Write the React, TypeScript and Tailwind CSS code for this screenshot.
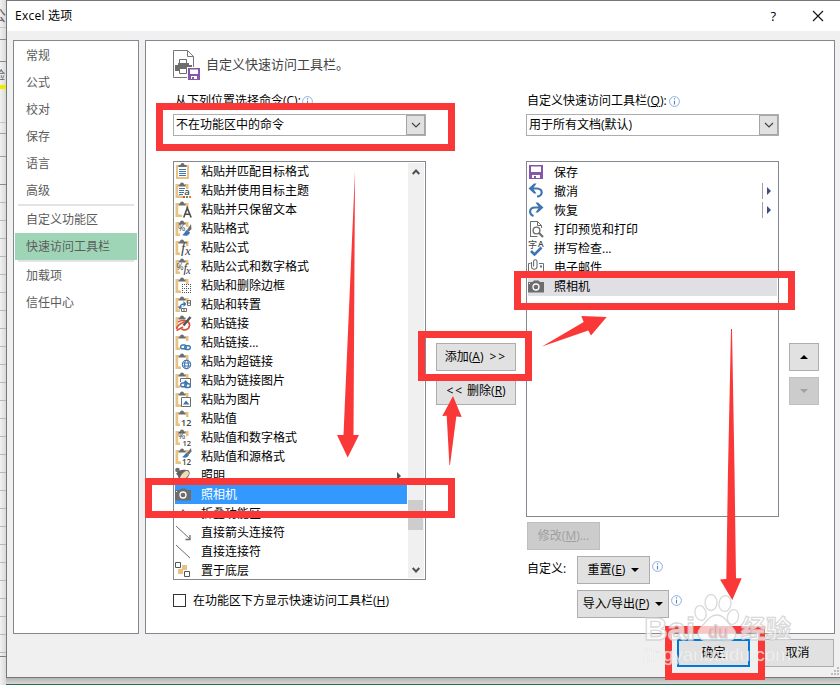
import React from 'react';

const RED = '#fb3838';
const TAN = '#e8c283';
const GRAY = '#6d6d6d';
const BLUE = '#3f76b0';

interface CommandItem {
  label: string;
  icon: string;
  arrow?: boolean;
  selected?: boolean;
}

const sheetLines = [
  { h: 28, c: 'border-[#c6c6c6]' },
  { h: 12, c: 'border-[#8c8c8c]' },
  { h: 22, c: 'border-[#8c8c8c]' },
  { h: 61, c: 'border-[#c6c6c6]' },
  { h: 11, c: 'border-[#a0a0a0]' },
  { h: 23, c: 'border-[#a0a0a0]' },
  { h: 28, c: 'border-[#8c8c8c]' },
  ...Array.from({ length: 26 }, () => ({ h: 18, c: 'border-[#b8b8b8]' })),
  { h: 4, c: 'border-[#808080]' },
];

const categories = ['常规', '公式', '校对', '保存', '语言', '高级', '-', '自定义功能区', '快速访问工具栏', '-', '加载项', '信任中心'];

const commands: CommandItem[] = [
  { label: '粘贴并匹配目标格式', icon: 'lines' },
  { label: '粘贴并使用目标主题', icon: 'theme' },
  { label: '粘贴并只保留文本', icon: 'text' },
  { label: '粘贴格式', icon: 'format' },
  { label: '粘贴公式', icon: 'fx' },
  { label: '粘贴公式和数字格式', icon: 'pfx' },
  { label: '粘贴和删除边框', icon: 'noborder' },
  { label: '粘贴和转置', icon: 'transpose' },
  { label: '粘贴链接', icon: 'pastelink' },
  { label: '粘贴链接...', icon: 'link' },
  { label: '粘贴为超链接', icon: 'hyper' },
  { label: '粘贴为链接图片', icon: 'linkpic' },
  { label: '粘贴为图片', icon: 'pic' },
  { label: '粘贴值', icon: 'val' },
  { label: '粘贴值和数字格式', icon: 'pval' },
  { label: '粘贴值和源格式', icon: 'sval' },
  { label: '照明', icon: 'light', arrow: true },
  { label: '照相机', icon: 'camera', selected: true },
  { label: '折叠功能区', icon: 'collapse' },
  { label: '直接箭头连接符', icon: 'arrow' },
  { label: '直接连接符', icon: 'line' },
  { label: '置于底层', icon: 'back' },
];

const toolbar: CommandItem[] = [
  { label: '保存', icon: 'save' },
  { label: '撤消', icon: 'undo', arrow: true },
  { label: '恢复', icon: 'redo', arrow: true },
  { label: '打印预览和打印', icon: 'preview' },
  { label: '拼写检查...', icon: 'spell' },
  { label: '电子邮件', icon: 'mail' },
  { label: '照相机', icon: 'camera', selected: true },
];

const Board = () => (
  <g>
    <path d="M.5 3h3v2.500h-.3v9.100H5V17H.5zM10 3h3.500v5H11V5.500h-1z" fill={TAN} />
    <path d="M3.500 5.500V3.500H5a2 2 0 0 1 4 0h1.500v2z" fill={GRAY} />
  </g>
);

const Chain = () => (
  <g fill="none" stroke={BLUE} strokeWidth="1.400">
    <rect x="5.700" y="12" width="5.600" height="3.800" rx="1.900" />
    <rect x="9.700" y="12.700" width="5.600" height="3.800" rx="1.900" />
  </g>
);

const T = ({ x, y, s, children, italic, thin }: any) => (
  <text
    x={x}
    y={y}
    fontSize={s}
    fill="#444"
    fontStyle={italic ? 'italic' : 'normal'}
    fontWeight={italic || thin ? 400 : 600}
    fontFamily={italic ? '"Liberation Serif", serif' : '"Open Sans", sans-serif'}
  >
    {children}
  </text>
);

const glyphs: Record<string, React.ReactNode> = {
  lines: (
    <>
      <path d="M1 3h13v14H1z" fill={TAN} />
      <path d="M3 5h9v10H3z" fill="#fff" />
      <path d="M3.500 5V3H5.500a2 2 0 0 1 4 0h2v2z" fill={GRAY} />
      <path d="M4 7.500h7M4 9.500h7M4 11.500h7M4 13.500h7" stroke={BLUE} />
    </>
  ),
  theme: (
    <>
      <Board />
      <path d="M3 14.600h5V17H3z" fill={TAN} />
      <path d="M4 7.500h6M4 9.500h5M4 11.500h5M4 13.500h4" stroke={BLUE} />
      <T x={9.200} y={14} s={9.500}>a</T>
      <path d="M8 15h2v2H8z" fill="#d2522b" />
      <path d="M11 15h2v2h-2z" fill="#3f9a70" />
      <path d="M14 15h2v2h-2z" fill="#e07b28" />
    </>
  ),
  text: (
    <>
      <Board />
      <path d="M3 14.600h4V17H3z" fill={TAN} />
      <path d="M8.700 17.500 12.300 8l3.800 9.500M10 14.300h4.800" fill="none" stroke="#4d4d4d" strokeWidth="1.600" />
    </>
  ),
  format: (
    <>
      <Board />
      <T x={3} y={12} s={9} thin>%</T>
      <path d="m16 5-4 6 2 1.500 2.500-2.500z" fill={GRAY} />
      <path d="M12 11c-2 .5-2 4-5 5 3 1.600 7 1 8-2.600z" fill={BLUE} />
    </>
  ),
  fx: (
    <>
      <Board />
      <T x={6} y={15} s={15} italic>f</T>
      <T x={10} y={16.500} s={13} italic>x</T>
    </>
  ),
  pfx: (
    <>
      <Board />
      <T x={1.500} y={12.500} s={8.500} thin>%</T>
      <T x={8.500} y={14.500} s={13} italic>f</T>
      <T x={11} y={16.500} s={11} italic>x</T>
    </>
  ),
  noborder: (
    <>
      <Board />
      <path d="M3 14.600h3V17H3z" fill={TAN} />
      <path d="M7 8.500h9M7 12.500h9M7 16.500h9" stroke="#555" strokeDasharray="1 1" />
      <path d="M7.500 8v9M11.500 8v9M15.500 8v9" stroke="#555" strokeDasharray="1 1" />
    </>
  ),
  transpose: (
    <>
      <Board />
      <path d="M5 13c0-3 1-4 5-4" fill="none" stroke={BLUE} strokeWidth="1.500" />
      <path d="m8.500 6 3 3-3 3zM2.600 11.500h4.800L5 14.500z" fill={BLUE} />
      <path d="M12.500 5.500h3v5h-3zM12.500 8h3M6.500 13.500h5v3h-5zM9 13.500v3" fill="none" stroke={GRAY} />
    </>
  ),
  pastelink: (
    <>
      <path d="M.5 3h3v2.500H3V14H.5z" fill={TAN} />
      <path d="M3 8c5-3 12-1 11.500 3.500-.5 5-6 5-8 3.500M1.500 15c1-5 5-6 8-7M1.500 16.500 8 13" fill="none" stroke="#d9553b" strokeWidth="1.700" />
      <path d="M3.500 5.500V3.500H5a2 2 0 0 1 4 0h1.500v2z" fill={GRAY} />
      <path d="M8.500 11.500 15.500 3" stroke="#555" strokeWidth="2.400" />
    </>
  ),
  link: (
    <>
      <Board />
      <Chain />
    </>
  ),
  hyper: (
    <>
      <Board />
      <path d="M3 14.600h3V17H3z" fill={TAN} />
      <g fill="none" stroke={BLUE} strokeWidth="1.100">
        <circle cx="11.500" cy="12.500" r="4.200" fill="#fff" />
        <ellipse cx="11.500" cy="12.500" rx="1.900" ry="4.200" />
        <path d="M7.700 11h7.600M7.700 14h7.600" />
      </g>
    </>
  ),
  linkpic: (
    <>
      <Board />
      <path d="M5.500 11V7.500h10v9" fill="none" stroke={GRAY} />
      <path d="m8 12 2.500-3 3 3z" fill={BLUE} />
      <Chain />
    </>
  ),
  pic: (
    <>
      <Board />
      <path d="M3 14.600h3V17H3z" fill={TAN} />
      <path d="M6.500 7.500h9v9h-9z" fill="#fff" stroke={GRAY} />
      <path d="m8 14.500 3-4 3.500 4z" fill={BLUE} />
    </>
  ),
  val: (
    <>
      <Board />
      <T x={6} y={17} s={9}>12</T>
    </>
  ),
  pval: (
    <>
      <Board />
      <T x={3} y={11} s={9} thin>%</T>
      <T x={7.500} y={18} s={7.500}>12</T>
    </>
  ),
  sval: (
    <>
      <Board />
      <path d="M3 14.600h3V17H3z" fill={TAN} />
      <path d="m16 1-4 5 2 1.500 2.500-3z" fill={GRAY} />
      <path d="M12 6c-2.500 0-2 3-5 4 3 1.500 6.500.5 7-2.500z" fill={BLUE} />
      <T x={7} y={17.500} s={8}>12</T>
    </>
  ),
  light: (
    <>
      <circle cx="2.500" cy="4" r="2.300" fill={GRAY} />
      <path d="M1 8c3-5 9-5 13-3L5 15C3 13 4 9 1 8z" fill="#5f5f5f" />
      <ellipse cx="9.500" cy="9.500" rx="6" ry="3.300" transform="rotate(-48 9.500 9.500)" fill="#f2ddb8" stroke={GRAY} />
    </>
  ),
  camera: (
    <>
      <path d="M0 5h4.500L6 3.500h4.500L12 5h4v10.500H0z" fill={GRAY} />
      <circle cx="8" cy="10" r="3" fill={GRAY} stroke="#fff" strokeWidth="1.300" />
      <path d="M1 6.500h1" stroke="#fff" />
    </>
  ),
  collapse: <path d="m4 10 4-5 4 5z" fill={GRAY} />,
  arrow: (
    <>
      <path d="m1 3 14 13" stroke={GRAY} />
      <path d="M15 12v4.500h-4.500" fill="none" stroke={GRAY} strokeWidth="1.300" />
    </>
  ),
  line: <path d="m1 3 14 13" stroke={GRAY} />,
  back: (
    <>
      <path d="M7 4h5v5H7zM3 8h5v5H3z" fill={TAN} />
      <path d="M.5 1.500h5v5h-5zM9.500 10.500h5v5h-5z" fill="#fff" stroke="#555" />
    </>
  ),
  save: (
    <>
      <path d="M1 2h14v14H1z" fill="#8656a8" />
      <path d="M3 3.500h10V9H3zM4 12h8v3H4z" fill="#fff" />
      <path d="M6 13h2v2H6z" fill="#8656a8" />
    </>
  ),
  undo: (
    <>
      <path d="M3 6.500h6c6.500 0 6 8 0 8" fill="none" stroke={BLUE} strokeWidth="2.200" />
      <path d="M.5 6.500 6 1.500h2.500L5 6.500l3.500 5H6z" fill={BLUE} />
    </>
  ),
  redo: (
    <>
      <path d="M13 6.500H7c-6.500 0-6 7-1.500 8.500" fill="none" stroke={BLUE} strokeWidth="2.200" />
      <path d="M15.500 6.500 10 1.500H7.500l3.500 5-3.500 5H10z" fill={BLUE} />
    </>
  ),
  preview: (
    <>
      <path d="M2.500 17V1.500h7l4 4V8M9.500 1.500v4h4M2.500 16.500h7" fill="none" stroke={GRAY} />
      <circle cx="8.500" cy="10.500" r="3.400" fill="#fff" stroke={GRAY} strokeWidth="1.400" />
      <path d="m11 13 4 4" stroke={GRAY} strokeWidth="2.200" />
    </>
  ),
  spell: (
    <>
      <text x="0" y="9" fontSize="9" fill="#444" fontFamily='"Noto Sans CJK SC", sans-serif'>字</text>
      <T x={10} y={7.500} s={8.500}>A</T>
      <path d="m3 12 3.500 3.500L13.500 8.500" fill="none" stroke={BLUE} strokeWidth="2.600" />
    </>
  ),
  mail: (
    <>
      <path d="M2.500 5.500H.5v11M11 5.500h4.500v11" fill="none" stroke={GRAY} />
      <path d="M3.500 4v5a2.800 2.800 0 0 0 5.500 0V3.500a1.700 1.700 0 0 0-3.400 0v5" fill="none" stroke={GRAY} strokeWidth="1.100" />
      <path d="M12 7.500h2v2h-2z" fill={BLUE} />
    </>
  ),
};

const Icon = ({ name }: { name: string }) => (
  <svg className="mr-2 h-[19px] w-[18px] shrink-0 overflow-visible" viewBox="0 0 18 19">
    {glyphs[name]}
  </svg>
);

const Info = ({ className = '' }: { className?: string }) => (
  <svg className={`h-[11px] w-[11px] shrink-0 ${className}`} viewBox="0 0 11 11">
    <circle cx="5.500" cy="5.500" r="4.900" fill="#fff" stroke="#8aaede" />
    <path d="M5.500 2.300v1.300M5.500 4.800v3.700" stroke="#5a7fc0" strokeWidth="1.100" />
  </svg>
);

const Select = ({ value }: { value: string }) => (
  <div className="flex h-[22px] border border-[#abadb3] bg-white">
    <span className="flex-1 pl-[2px] leading-[20px]">{value}</span>
    <span className="flex w-[19px] items-center justify-center border border-[#a5a5a5] bg-[#e1e1e1]">
      <svg width="10" height="6" viewBox="0 0 10 6">
        <path d="m1 1 4 4 4-4" fill="none" stroke="#444" strokeWidth="1.200" />
      </svg>
    </span>
  </div>
);

const tones = {
  normal: 'border border-[#adadad] bg-[#e1e1e1]',
  primary: 'border-2 border-[#0078d7] bg-[#e1e1e1]',
  disabled: 'border border-[#bfbfbf] bg-[#cccccc] text-[#a0a0a0]',
};

interface ButtonProps {
  tone?: keyof typeof tones;
  className?: string;
  children: React.ReactNode;
}

const Button = ({ tone = 'normal', className = '', children }: ButtonProps) => (
  <button className={`flex h-7 shrink-0 items-center justify-center whitespace-pre ${tones[tone]} ${className}`}>
    {children}
  </button>
);

const Caret = ({ up = false, fill = '#000' }: { up?: boolean; fill?: string }) => (
  <svg width="8" height="4" viewBox="0 0 8 4">
    <path d={up ? 'M0 4 4 0l4 4z' : 'M0 0h8L4 4z'} fill={fill} />
  </svg>
);

const Sheet = () => (
  <div className="relative flex h-[685px] w-1.5 shrink-0 flex-col overflow-hidden bg-linear-to-r from-[#f1f1f1] to-[#dadada]">
    {sheetLines.map((l, i) => (
      <div key={i} className={`shrink-0 border-b ${l.c}`} style={{ height: l.h }} />
    ))}
    <span className="absolute top-[5px] -left-[9px] text-[15px] leading-5 text-[#666]">公</span>
    <span className="absolute top-[68px] -left-[7px] text-[12px] leading-4 text-[#666]">验</span>
    <span className="absolute top-[85px] left-0 h-1 w-1.5 bg-[#eded00]" />
  </div>
);

const Sidebar = () => (
  <div className="flex h-[594px] w-[126px] shrink-0 flex-col border border-[#828790] bg-white px-px pt-px text-[#5c5c5c]">
    {categories.map((c, i) =>
      c === '-' ? (
        <div key={i} className="mr-[3px] ml-[3px] h-[2px] bg-[#e3e3e3]" />
      ) : (
        <div key={i} className={`h-[27px] pl-[11px] leading-[28px] ${i === 8 ? 'bg-[#9fd5b7]' : ''}`}>
          {c}
        </div>
      )
    )}
  </div>
);

const CommandList = () => (
  <div className="mt-[25px] flex h-[419px] overflow-hidden border border-[#828790] bg-white pl-px">
    <div className="w-[232px] shrink-0">
      {commands.map((c) => (
        <div key={c.label} className={`flex h-[19px] items-center ${c.selected ? 'bg-[#3399ff] text-white' : ''}`}>
          <Icon name={c.icon} />
          <span className="flex-1 leading-[18px]">{c.label}</span>
          {c.arrow && (
            <svg className="mr-1.5" width="4" height="8" viewBox="0 0 4 8">
              <path d="M0 0v8l4-4z" fill="#555" />
            </svg>
          )}
        </div>
      ))}
    </div>
    <div className="my-px ml-px flex w-4 flex-col items-center bg-[#f0f0f0]">
      <svg className="mt-1.5" width="8" height="6" viewBox="0 0 8 6">
        <path d="m.7 5 3.300-3.500L7.300 5" fill="none" stroke="#505050" strokeWidth="2" />
      </svg>
      <div className="mt-[325px] mr-px h-[30px] w-[15px] bg-[#cdcdcd]" />
      <svg className="mt-[37px]" width="8" height="6" viewBox="0 0 8 6">
        <path d="M.7 1 4 4.500 7.300 1" fill="none" stroke="#505050" strokeWidth="2" />
      </svg>
    </div>
  </div>
);

const ToolbarList = () => (
  <div className="mt-[25px] h-[356px] border border-[#828790] bg-white px-px pt-px">
    {toolbar.map((c) => (
      <div key={c.label} className={`flex h-[19px] items-center ${c.selected ? 'bg-[#e0dfe4]' : ''}`}>
        <Icon name={c.icon} />
        <span className="flex-1 leading-[18px]">{c.label}</span>
        {c.arrow && (
          <span className="mb-[2px] mr-1.5 flex h-4 w-[9px] items-center justify-end border-l border-[#a0a0a0]">
            <svg width="4" height="8" viewBox="0 0 4 8">
              <path d="M0 0v8l4-4z" fill="#3c4d84" />
            </svg>
          </span>
        )}
      </div>
    ))}
  </div>
);

const MainPanel = () => (
  <div className="h-[594px] w-[690px] shrink-0 border border-[#828790] bg-white pt-[9px] pl-[27px]">
    <div className="flex h-[31px] items-start">
      <svg className="mr-[5px] shrink-0" width="28" height="31" viewBox="0 0 28 31">
        <path d="M.5.500h14l6 6v21H.5zM14.500.500v6h6" fill="#fff" stroke="#777" />
        <path d="M2 15h3v-2h11v2h3v6H2z" fill={GRAY} />
        <path d="M6.500 9.500h7v4h-7zM6.500 18.500h7v5h-7z" fill="#fff" stroke={GRAY} />
        <path d="M14 17h14v14H14z" fill="#fff" />
        <path d="M15 18h12v12H15z" fill="#8656a8" />
        <path d="M17 19.500h8V24h-8zM18 26h6v3h-6z" fill="#fff" />
        <path d="M19 27h2v2h-2z" fill="#8656a8" />
      </svg>
      <span className="pt-1.5 text-[13px] leading-4 text-[#444]">自定义快速访问工具栏。</span>
    </div>

    <div className="mt-[11px] flex">
      <div className="w-[253px] shrink-0">
        <div className="mb-1 flex h-[18px] items-center pl-[2px]">
          <span>从下列位置选择命令(<u>C</u>):</span>
          <Info className="ml-px" />
        </div>
        <Select value="不在功能区中的命令" />
        <CommandList />
        <div className="mt-[14px] flex h-[13px] items-center">
          <span className="mr-[7px] h-[13px] w-[13px] border border-[#333] bg-white" />
          <span>在功能区下方显示快速访问工具栏(<u>H</u>)</span>
        </div>
      </div>

      <div className="mr-[10px] ml-[10px] flex w-20 shrink-0 flex-col gap-1.5 pt-[251px]">
        <Button>添加(<u>A</u>)<span className="ml-1.5 tracking-[2px]">&gt;&gt;</span></Button>
        <Button><span className="mr-[3px] tracking-[2px]">&lt;&lt;</span>删除(<u>R</u>)</Button>
      </div>

      <div className="w-[253px] shrink-0">
        <div className="mb-1 flex h-[18px] items-center pl-px">
          <span>自定义快速访问工具栏(<u>Q</u>):</span>
          <Info className="ml-[2px]" />
        </div>
        <Select value="用于所有文档(默认)" />
        <ToolbarList />
        <Button tone="disabled" className="mt-[5px] ml-px w-[73px]">修改(<u>M</u>)...</Button>
        <div className="mt-1.5 flex pl-px">
          <span className="w-[50px] pt-1 leading-[18px]">自定义:</span>
          <div className="flex flex-col gap-1.5">
            <div className="flex">
              <Button className="w-[73px] gap-1.5"><span>重置(<u>E</u>)</span><Caret /></Button>
              <Info className="mt-[5px] ml-[2px]" />
            </div>
            <div className="flex">
              <Button className="w-[92px] gap-1.5"><span>导入/导出(<u>P</u>)</span><Caret /></Button>
              <Info className="mt-[5px] ml-[2px]" />
            </div>
          </div>
        </div>
      </div>

      <div className="ml-[10px] flex w-[30px] flex-col gap-1.5 pt-[251px]">
        <Button><Caret up /></Button>
        <Button tone="disabled"><Caret fill="#a0a0a0" /></Button>
      </div>
    </div>
  </div>
);

const Dialog = () => (
  <div className="flex h-[678px] w-[834px] flex-col overflow-hidden border-t border-b border-l border-[#777] bg-[#f0f0f0]">
    <div className="flex h-[30px] shrink-0 items-center bg-white pl-2">
      <span className="flex-1 leading-4 tracking-[.25px]">Excel 选项</span>
      <span className="mr-9 text-[13px] font-medium">?</span>
      <svg className="mr-4" width="12" height="12" viewBox="0 0 12 12">
        <path d="m1 1 10 10M11 1 1 11" stroke="#111" strokeWidth="1.100" />
      </svg>
    </div>
    <div className="flex gap-1.5 pt-[9px] pl-1.5">
      <Sidebar />
      <MainPanel />
    </div>
    <div className="flex justify-end gap-[11px] pt-[5px] pr-1.5">
      <Button tone="primary" className="w-[73px]">确定</Button>
      <Button className="w-[73px]">取消</Button>
    </div>
  </div>
);

const Grip = () => (
  <svg className="absolute top-[667px] left-[831px]" width="9" height="9" viewBox="0 0 9 9">
    <path d="M6 0h2v2H6zM3 3h2v2H3zM6 3h2v2H6zM0 6h2v2H0zM3 6h2v2H3zM6 6h2v2H6z" fill="#bdbdbd" />
  </svg>
);

const Watermark = () => (
  <svg className="absolute top-[585px] left-[635px]" width="170" height="90" viewBox="0 0 170 90">
    <g fill="#fff" fillOpacity=".7" stroke="#cfcfcf" strokeOpacity=".8" strokeWidth="1.300">
      <ellipse cx="65.500" cy="28" rx="5.500" ry="7.500" transform="rotate(-14 65.500 28)" />
      <ellipse cx="76" cy="17.500" rx="6" ry="8" />
      <ellipse cx="90" cy="18.500" rx="6" ry="8" transform="rotate(8 90 18.500)" />
      <ellipse cx="98" cy="32" rx="5.500" ry="7.500" transform="rotate(14 98 32)" />
      <path d="M82 30c7 0 9 6 14 11 8 7 5 15-4 15-7-1-13-1-19 0-10 0-13-8-6-15 5-5 8-11 15-11z" />
      <g fontFamily='"Liberation Sans", "Noto Sans CJK SC", sans-serif' fontWeight="700">
        <text x="9" y="55" fontSize="32" textLength="51" lengthAdjust="spacingAndGlyphs">Bai</text>
        <text x="73" y="53" fontSize="18" textLength="20" lengthAdjust="spacingAndGlyphs" fill={RED} fillOpacity=".35">du</text>
        <text x="106" y="53" fontSize="25" textLength="50" lengthAdjust="spacingAndGlyphs">经验</text>
      </g>
    </g>
    <text
      x="9"
      y="76"
      fontSize="19"
      fill="#fff"
      fillOpacity=".7"
      stroke="#ccc"
      strokeOpacity=".4"
      strokeWidth=".6"
      fontFamily='"Liberation Sans", sans-serif'
      textLength="147"
      lengthAdjust="spacingAndGlyphs"
    >
      jingyanbaidu.com
    </text>
  </svg>
);

const Marks = () => (
  <>
    <div className="absolute top-[103px] left-[156px] h-[48px] w-[299px] border-7 border-[#fb3838]" />
    <div className="absolute top-[478px] left-[145px] h-[40px] w-[310px] border-7 border-[#fb3838]" />
    <div className="absolute top-[271px] left-[514px] h-[39px] w-[281px] border-7 border-[#fb3838]" />
    <div className="absolute top-[331px] left-[418px] h-[50px] w-[114px] border-7 border-[#fb3838]" />
    <div className="absolute top-[626px] left-[665px] h-[54px] w-[100px] border-7 border-[#fb3838]" />
    <svg className="absolute top-0 left-0" width="840" height="685" viewBox="0 0 840 685" fill={RED}>
      <path d="M355 171 353.500 435H359l-11.300 22.500L337 435h6.500z" />
      <path d="m453 396 8.700 21-5.400-.5L450 465h-.6l-2.700-49.300-4.400.3z" />
      <path d="m542 346.500 41.700-24.500-2.400-6 25.400 1L591 335.500l-2.700-5z" />
      <path d="m731 329 1 0 2.500 141 1.500 108.300h5.700L732.300 600 720 579.500l6.300-.5L728 470z" />
    </svg>
  </>
);

export default function App() {
  return (
    <div className="relative flex h-[685px] w-[840px] overflow-hidden bg-[#d0d0d0] font-['Open_Sans','Noto_Sans_CJK_SC',sans-serif] text-[12px] leading-4 text-black">
      <Sheet />
      <div className="flex flex-col">
        <Dialog />
        <div className="h-1.5 bg-linear-to-b from-[#b4b4b4] to-[#d8d8d8]" />
        <div className="h-px bg-[#217346]" />
      </div>
      <Grip />
      <Marks />
      <Watermark />
    </div>
  );
}
